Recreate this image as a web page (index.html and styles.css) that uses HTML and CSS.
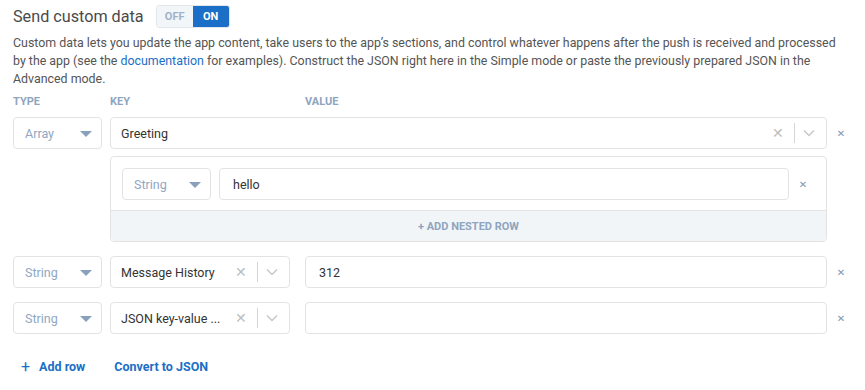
FILE: index.html
```html
<!DOCTYPE html>
<html lang="en">
<head>
  <meta charset="UTF-8" />
  <title>Send custom data</title>
  <link rel="stylesheet" href="styles.css">
</head>
<body>
  <section class="custom-data">
    <div class="title-row">
      <h2>Send custom data</h2>
      <div class="toggle">
        <span class="toggle-off">OFF</span>
        <span class="toggle-on">ON</span>
      </div>
    </div>
    <p class="intro">Custom data lets you update the app content, take users to the app’s sections, and control whatever happens after the push is received and processed by the app (see the <a href="#">documentation</a> for examples). Construct the JSON right here in the Simple mode or paste the previously prepared JSON in the Advanced mode.</p>

    <div class="heads">
      <span class="h-type">TYPE</span>
      <span class="h-key">KEY</span>
      <span class="h-value">VALUE</span>
    </div>

    <!-- array row -->
    <div class="row">
      <div class="select type"><span>Array</span><i class="caret"></i></div>
      <div class="group">
        <div class="select key wide">
          <span class="key-text">Greeting</span>
          <span class="clear">✕</span><span class="sep"></span>
          <svg class="chev" width="12" height="8" viewBox="0 0 12 8"><path d="M1 1.5l5 5 5-5" fill="none" stroke="#c8c8c8" stroke-width="1.5"/></svg>
        </div>
        <div class="nested">
          <div class="nested-row">
            <div class="select type"><span>String</span><i class="caret"></i></div>
            <div class="input">hello</div>
            <button class="remove">✕</button>
          </div>
          <div class="nested-add">+ ADD NESTED ROW</div>
        </div>
      </div>
      <button class="remove">✕</button>
    </div>

    <div class="row">
      <div class="select type"><span>String</span><i class="caret"></i></div>
      <div class="select key">
        <span class="key-text">Message History</span>
        <span class="clear">✕</span><span class="sep"></span>
        <svg class="chev" width="12" height="8" viewBox="0 0 12 8"><path d="M1 1.5l5 5 5-5" fill="none" stroke="#c8c8c8" stroke-width="1.5"/></svg>
      </div>
      <div class="input value">312</div>
      <button class="remove">✕</button>
    </div>

    <div class="row">
      <div class="select type"><span>String</span><i class="caret"></i></div>
      <div class="select key">
        <span class="key-text">JSON key-value ...</span>
        <span class="clear">✕</span><span class="sep"></span>
        <svg class="chev" width="12" height="8" viewBox="0 0 12 8"><path d="M1 1.5l5 5 5-5" fill="none" stroke="#c8c8c8" stroke-width="1.5"/></svg>
      </div>
      <div class="input value"></div>
      <button class="remove">✕</button>
    </div>

    <div class="actions">
      <a href="#" class="add-row"><span class="plus">+</span>Add row</a>
      <a href="#" class="convert">Convert to JSON</a>
    </div>
  </section>
</body>
</html>
```

FILE: styles.css
```css
body {
  margin: 0;
  font-family: Roboto, "Liberation Sans", sans-serif;
  background: #fff;
  color: #444;
}
.custom-data {
  width: 842px;
  padding: 5px 0 0 13px;
}
.title-row {
  display: flex;
  align-items: center;
  height: 22px;
}
h2 {
  margin: 0;
  font-size: 16.2px;
  font-weight: 400;
  color: #4a4a4a;
}
.toggle {
  display: flex;
  margin-left: 12px;
  height: 21px;
  border: 1px solid #e1e6ec;
  border-radius: 3px;
  overflow: hidden;
  font-size: 11px;
  font-weight: 700;
}
.toggle span {
  width: 36px;
  display: flex;
  align-items: center;
  justify-content: center;
}
.toggle-off {
  background: #f3f6f9;
  color: #9fb3c8;
}
.toggle-on {
  background: #1b6fc6;
  color: #fff;
}
.intro {
  width: 836px;
  margin: 7px 0 0;
  font-size: 12.4px;
  line-height: 18px;
  color: #555;
}
.intro a {
  color: #1b6fc6;
  text-decoration: none;
}
.heads {
  display: flex;
  margin-top: 7px;
  font-size: 11px;
  font-weight: 700;
  color: #8ea5bf;
  height: 14px;
  line-height: 14px;
}
.h-type { width: 97px; }
.h-key { width: 195px; }
.row {
  display: flex;
  align-items: flex-start;
  gap: 8px;
  margin-top: 14px;
  padding-right: 8px;
}
.heads + .row { margin-top: 8px; }
.row + .row:nth-of-type(2) { margin-top: 17px; }
.select, .input {
  box-sizing: border-box;
  height: 32px;
  border: 1px solid #e3e3e3;
  border-radius: 4px;
  display: flex;
  align-items: center;
  font-size: 12.5px;
  background: #fff;
}
.type {
  width: 89px;
  flex: none;
  padding: 0 0 0 11px;
  color: #90a7c2;
  position: relative;
}
.caret {
  position: absolute;
  right: 9px;
  top: 13px;
  border-left: 6px solid transparent;
  border-right: 6px solid transparent;
  border-top: 6px solid #8aa1bb;
}
.key {
  width: 180px;
  flex: none;
  padding: 0 10px 0 10px;
  color: #333;
}
.key-text {
  flex: 1;
  white-space: nowrap;
  overflow: hidden;
}
.clear {
  color: #bdbdbd;
  font-size: 14px;
  width: 16px;
  text-align: center;
}
.sep {
  width: 1px;
  height: 20px;
  background: #d4d4d4;
  margin: 0 8px 0 8px;
}
.chev { margin-right: 1px; }
.group {
  flex: 1;
}
.key.wide {
  width: auto;
}
.nested {
  margin-top: 7px;
  border: 1px solid #e3e3e3;
  border-radius: 4px;
  overflow: hidden;
}
.nested-row {
  display: flex;
  gap: 8px;
  padding: 11px 17px 10px 11px;
  align-items: center;
}
.nested-row .input {
  flex: 1;
}
.input {
  padding: 0 13px;
  color: #333;
}
.value {
  flex: 1;
  margin-left: 7px;
}
.nested-add {
  height: 30px;
  border-top: 1px solid #e3e3e3;
  background: #f2f5f8;
  color: #8ea5bf;
  font-size: 11px;
  font-weight: 700;
  display: flex;
  align-items: center;
  justify-content: center;
}
.remove {
  width: 12px;
  height: 32px;
  padding: 0;
  border: none;
  background: none;
  color: #7f98b6;
  font-size: 10px;
  font-family: "DejaVu Sans", sans-serif;
  cursor: pointer;
}
.actions {
  display: flex;
  align-items: center;
  gap: 29px;
  margin-top: 23px;
  padding-left: 8px;
  font-size: 12.5px;
  font-weight: 700;
}
.actions a {
  color: #1b6fc6;
  text-decoration: none;
  display: flex;
  align-items: center;
}
.plus {
  font-size: 16px;
  font-weight: 400;
  margin-right: 9px;
}
```
